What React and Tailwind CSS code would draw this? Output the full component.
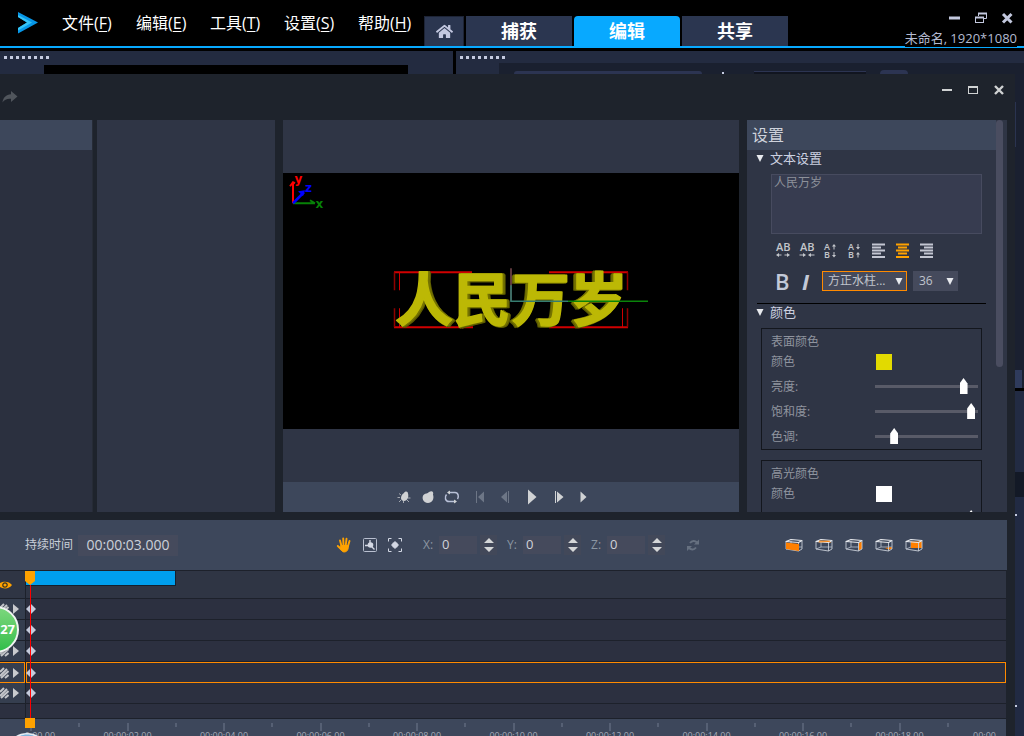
import React from "react";
import { FaHome } from "react-icons/fa";

const menus = [
  ["文件", "F"],
  ["编辑", "E"],
  ["工具", "T"],
  ["设置", "S"],
  ["帮助", "H"],
];

const tabs = ["捕获", "编辑", "共享"];

function Header() {
  return (
    <header className="flex h-12 shrink-0 items-end border-b-2 border-[#08a9ff] bg-black">
      <div className="flex h-full w-[62px] shrink-0 items-center pl-[18px]">
        <svg width="20" height="22" viewBox="0 0 20 22" aria-hidden="true">
          <path d="M0 0 L20 10.5 L0 21.5 V16 L9 10.5 L0 5 Z" fill="#0797e8" />
          <path d="M0 3 L14 10.5 L0 18.5 V16 L9 10.5 L0 5 Z" fill="#35c4f5" />
        </svg>
      </div>
      <nav className="flex h-full items-center">
        {menus.map(([name, key]) => (
          <button key={key} type="button" className="w-[74px] text-left text-base text-white last:w-[66px]">
            {name}(<span className="underline underline-offset-2">{key}</span>)
          </button>
        ))}
      </nav>
      <div className="flex items-end gap-0.5">
        <button type="button" aria-label="主页" className="flex h-[30px] w-10 items-center justify-center border border-b-0 border-[#1d2436] bg-[#2b3650] text-[#c3c8e0]">
          <FaHome size={17} />
        </button>
        {tabs.map((t) => (
          <button
            key={t}
            type="button"
            className={
              "h-[30px] w-[106px] text-lg leading-[30px] font-bold text-white " +
              (t === "编辑" ? "rounded-t-sm bg-[#08a9ff]" : "bg-[#2b3650]")
            }
          >
            {t}
          </button>
        ))}
      </div>
      <div className="ml-auto flex h-full flex-col items-end justify-end pr-[7px]">
        <div className="flex items-center gap-3.5 pr-1 text-[#c3c8de]">
          <button type="button" aria-label="最小化">
            <svg width="12" height="12" viewBox="0 0 12 12"><path d="M0 6 H11" stroke="currentColor" strokeWidth="3" /></svg>
          </button>
          <button type="button" aria-label="还原">
            <svg width="12" height="12" viewBox="0 0 12 12" fill="none" stroke="currentColor">
              <path d="M3.5 4 V1.5 H11.5 V6.5 H9" /><path d="M3 1.5 H12" strokeWidth="2" />
              <rect x="0.5" y="5.5" width="8" height="5" /><path d="M0 5.5 H9" strokeWidth="2" />
            </svg>
          </button>
          <button type="button" aria-label="关闭">
            <svg width="12" height="12" viewBox="0 0 12 12"><path d="M2 2 L10.500 10.500 M10.500 2 L2 10.500" stroke="currentColor" strokeWidth="3" /></svg>
          </button>
        </div>
        <div className="mt-1.5 -mb-px bg-black text-[13px] leading-[17px] text-[#b4bbd0]">未命名, 1920*1080</div>
      </div>
    </header>
  );
}

function Grip() {
  return (
    <div className="flex gap-[3px] pt-[5px] pl-1">
      {[0, 1, 2, 3, 4, 5, 6, 7].map((i) => (
        <span key={i} className="size-[3px] bg-[#c5cbe0]" />
      ))}
    </div>
  );
}

function BackPanels() {
  return (
    <div className="flex h-[26px] shrink-0 gap-[3px] bg-black pt-[3px]">
      <div className="flex w-[453px] flex-col justify-between bg-[#232b40]">
        <Grip />
        <div className="mr-[45px] ml-11 h-[9px] bg-black" />
      </div>
      <div className="flex flex-1 flex-col justify-between bg-[#232b40]">
        <Grip />
        <div className="ml-[43px] flex h-[11px] items-end bg-[#1a202f] pl-[15px]">
          <span className="h-[3px] w-[188px] rounded-t-sm bg-[#2c3452]" />
          <span className="ml-5 size-0.5 bg-[#c5cbe0]" />
          <span className="ml-[30px] h-[3px] w-28 border-t border-[#2c3452] bg-[#111520]" />
          <span className="ml-3.5 h-1 w-7 rounded-t-sm bg-[#2c3452]" />
        </div>
      </div>
    </div>
  );
}

function RightEdge() {
  return (
    <div className="flex w-[9px] shrink-0 flex-col bg-[#1a2030]">
      <div className="mt-7 h-[45px] w-px bg-[#2a3350]" />
      <div className="mt-[223px] h-[18px] w-[7px] bg-[#2f3b5c]" />
      <div className="h-[3px] bg-black" />
      <div className="h-[81px] bg-[#222b43]" />
      <div className="h-[25px] bg-[#131926]" />
      <div className="flex flex-1 flex-col bg-[#212a43]">
        <span className="mt-[17px] size-0.5 bg-[#c5cbe0]" />
        <span className="mt-[189px] size-0.5 bg-[#c5cbe0]" />
      </div>
    </div>
  );
}

function TitleBar() {
  return (
    <div className="flex h-[46px] shrink-0 items-start justify-between">
      <button type="button" aria-label="重做" className="mt-4 ml-0.5 text-[#50555c]">
        <svg width="16" height="14" viewBox="0 0 16 14"><path d="M9 1 L15.500 6.500 L9 12 V8.800 C5 8.500 2.500 9.500 0.500 12.500 C1 7.500 4 4.500 9 4.200 Z" fill="currentColor" /></svg>
      </button>
      <div className="mt-2.5 flex gap-3.5 pr-2.5 text-[#d0d2d3]">
        <button type="button" aria-label="最小化">
          <svg width="12" height="12" viewBox="0 0 12 12"><path d="M1 6 H11" stroke="currentColor" strokeWidth="2" /></svg>
        </button>
        <button type="button" aria-label="最大化">
          <svg width="12" height="12" viewBox="0 0 12 12" fill="none" stroke="currentColor"><rect x="1.500" y="2.500" width="9" height="7" /><path d="M1 3 H11" strokeWidth="2" /></svg>
        </button>
        <button type="button" aria-label="关闭">
          <svg width="12" height="12" viewBox="0 0 12 12"><path d="M2 2 L10 10 M10 2 L2 10" stroke="currentColor" strokeWidth="2.400" /></svg>
        </button>
      </div>
    </div>
  );
}

function Canvas3D() {
  return (
    <svg className="block aspect-video w-full bg-black" viewBox="0 0 456 256">
      <g fontFamily="'DejaVu Sans', sans-serif" fontWeight="700" fontSize="12">
        <path d="M10 30 V9 M7 13 L10 9 L12 10" stroke="#f00" strokeWidth="2" fill="none" />
        <path d="M10 30 H32 M27 27 L32 30" stroke="#078207" strokeWidth="2" fill="none" />
        <path d="M10 30 L21 19" stroke="#00f" strokeWidth="2.500" />
        <path d="M15 18 L22 17 L20 23 Z" fill="#00f" />
        <text x="11.500" y="10" fill="#f00">y</text>
        <text x="22" y="19" fill="#00f">z</text>
        <text x="32.500" y="35" fill="#078207">x</text>
      </g>
      <g fill="none" stroke="#d00000" strokeWidth="2">
        <path d="M111 99 H189 M266 99 H345 M111 154 H190 M266 154 H345" />
        <path d="M111.500 99 V117 M111.500 135 V154 M344.500 99 V117 M344.500 135 V154" stroke="#8e0000" strokeWidth="1.500" />
        <path d="M116.500 99 V117 M116.500 135 V154 M339.500 135 V154" strokeWidth="1" />
      </g>
      <g
        fontFamily="'Noto Sans CJK SC', sans-serif"
        fontWeight="700"
        fontSize="58"
        fill="#bcb805"
        stroke="#bcb805"
        strokeLinejoin="round"
        strokeWidth="1.500"
      >
        <text x="112" y="148" className="[filter:drop-shadow(2px_0_0_#747200)_drop-shadow(1px_1px_0_#5c5b00)]">人民</text>
        <text x="229" y="148" className="[filter:drop-shadow(-2px_0_0_#747200)_drop-shadow(-1px_1px_0_#5c5b00)]">万岁</text>
      </g>
      <path d="M228 95 V128" stroke="#7c4a50" strokeWidth="1.500" />
      <path d="M228 112 V128 H285" stroke="#357c70" strokeWidth="1.500" fill="none" />
      <path d="M285 128 H365" stroke="#0a840a" strokeWidth="1.500" />
    </svg>
  );
}

function PlayButton({ label, dim, wide, children }) {
  return (
    <button
      type="button"
      aria-label={label}
      className={"flex h-full items-center justify-center " + (wide ? "w-[26px] " : "w-6 ") + (dim ? "text-[#6d7686]" : "text-[#d0d2d4]")}
    >
      <svg width="16" height="16" viewBox="0 0 16 16" fill="currentColor">{children}</svg>
    </button>
  );
}

function Preview() {
  return (
    <section className="flex min-w-0 flex-1 flex-col bg-[#2f3545]">
      <div className="flex min-h-0 flex-1 flex-col justify-center">
        <Canvas3D />
      </div>
      <div className="flex h-[30px] shrink-0 items-center bg-[#3d475b] pl-[109px]">
        <PlayButton label="光源">
          <path d="M8 4 C9 1.800 12 2 12 4.500 C13 8 11.500 12 8 12 C4 12 4 6.500 8 4 Z" />
          <path d="M1.500 8.500 H4 M3 4.500 L5 6 M3 13 L5 11 M7.500 12 V14 M11 11 L13 13 M12 9 H14.500" stroke="currentColor" strokeOpacity="0.7" />
        </PlayButton>
        <PlayButton label="材质">
          <path d="M9 3 C12 1 14 3 13 5.500 C14.500 10 12 14 8 14 C3 14 1 8 4 5.500 C5.500 4 7.500 5 9 3 Z" />
        </PlayButton>
        <PlayButton label="循环">
          <path d="M4 3.500 H11 C14.500 3.500 15 8 13.500 10 M12 12.500 H5 C1 12.500 0.500 8 2.500 5.500" stroke="#b9c1d8" strokeWidth="1.500" fill="none" />
          <path d="M3 3.500 L6 1.500 V5.500 Z M13 12.500 L10 10.500 V14.500 Z" />
        </PlayButton>
        <div className="ml-[3px] flex h-full">
          <PlayButton label="开始" dim wide><path d="M4 2 H5 V14 H4 Z M12 2.500 V13.500 L6 8 Z" /></PlayButton>
          <PlayButton label="上一帧" dim wide><path d="M10 2 H11 V14 H10 Z M9 2.500 V13.500 L3 8 Z" /></PlayButton>
          <PlayButton label="播放" wide><path d="M4 0.500 V15.500 L12.500 8 Z" /></PlayButton>
          <PlayButton label="下一帧" wide><path d="M5 2 H6 V14 H5 Z M7 2.500 V13.500 L13.500 8 Z" /></PlayButton>
          <PlayButton label="结尾" wide><path d="M4.500 2.500 V13.500 L10.500 8 Z" /></PlayButton>
        </div>
      </div>
    </section>
  );
}

function Caret() {
  return (
    <svg width="10" height="8" viewBox="0 0 10 8" aria-hidden="true" className="shrink-0">
      <path d="M1.500 1 H8.500 L5 8 Z" fill="#e8eaee" />
    </svg>
  );
}

function SpacingIcon({ label, inward }) {
  return (
    <button type="button" aria-label={label} className="w-6 text-[#c3c6cb]">
      <svg width="16" height="16" viewBox="0 0 16 16" fill="currentColor" className="overflow-visible">
        <text x="1" y="8" fontSize="11" fontWeight="600" fontFamily="'Open Sans', sans-serif">AB</text>
        {inward ? (
          <path d="M0.500 11.500 H4 V10 L7 12 L4 14 V12.500 H0.500 Z M15.500 11.500 H12 V10 L9 12 L12 14 V12.500 H15.500 Z" />
        ) : (
          <path d="M6.500 11.500 H4 V10 L1 12 L4 14 V12.500 H6.500 Z M9.500 11.500 H12 V10 L15 12 L12 14 V12.500 H9.500 Z" />
        )}
      </svg>
    </button>
  );
}

function LeadingIcon({ label, inward }) {
  return (
    <button type="button" aria-label={label} className="w-6 text-[#c3c6cb]">
      <svg width="16" height="16" viewBox="0 0 16 16" fill="currentColor" className="overflow-visible">
        <g fontSize="9" fontWeight="600" fontFamily="'Open Sans', sans-serif">
          <text x="1" y="7">A</text>
          <text x="1" y="15">B</text>
        </g>
        {inward ? (
          <path d="M10.500 1 H11.500 V4 H13 L11 6.500 L9 4 H10.500 Z M10.500 14.500 H11.500 V11.500 H13 L11 9 L9 11.500 H10.500 Z" />
        ) : (
          <path d="M10.500 6.500 H11.500 V3.500 H13 L11 1 L9 3.500 H10.500 Z M10.500 9 H11.500 V12 H13 L11 14.500 L9 12 H10.500 Z" />
        )}
      </svg>
    </button>
  );
}

function AlignIcon({ label, d, active }) {
  return (
    <button type="button" aria-label={label} className={"w-6 " + (active ? "text-[#ffa200]" : "text-[#c3c6d2]")}>
      <svg width="16" height="16" viewBox="0 0 16 16"><path d={d} stroke="currentColor" strokeWidth="1.800" /></svg>
    </button>
  );
}

function SliderRow({ id, label, value }) {
  return (
    <div className="flex h-[25px] items-center justify-between pr-[3px]">
      <label htmlFor={id}>{label}</label>
      <input
        id={id}
        type="range"
        min="0"
        max="100"
        defaultValue={value}
        className="h-4 w-[103px] appearance-none bg-transparent [&::-webkit-slider-runnable-track]:h-[3px] [&::-webkit-slider-runnable-track]:bg-[#595b68] [&::-webkit-slider-thumb]:-mt-[7px] [&::-webkit-slider-thumb]:h-4 [&::-webkit-slider-thumb]:w-2 [&::-webkit-slider-thumb]:appearance-none [&::-webkit-slider-thumb]:bg-white [&::-webkit-slider-thumb]:[clip-path:polygon(50%_0,100%_35%,100%_100%,0_100%,0_35%)]"
      />
    </div>
  );
}

function ColorBox({ id, title, yellow, values }) {
  return (
    <fieldset className="mr-[14px] ml-3.5 border border-[#13161d] pt-[3px] pl-[9px] text-xs text-[#8f949f]">
      <div className="h-5 leading-5">{title}</div>
      <div className="flex h-5 items-center">
        <span className="w-[105px]">颜色</span>
        <button type="button" aria-label={title} className={"size-4 " + (yellow ? "bg-[#e2da00]" : "bg-white")} />
      </div>
      <div className="pt-0.5">
        <SliderRow id={id + "-l"} label="亮度:" value={values[0]} />
        <SliderRow id={id + "-s"} label="饱和度:" value={values[1]} />
        <SliderRow id={id + "-h"} label="色调:" value={values[2]} />
      </div>
    </fieldset>
  );
}

function Settings() {
  return (
    <section className="flex w-[260px] shrink-0 overflow-hidden bg-[#2f3545]">
      <div className="min-w-0 flex-1 overflow-hidden">
        <h2 className="h-[30px] bg-[#3d475b] pl-[5px] text-base leading-[30px] text-[#ced2dc]">设置</h2>
        <h3 className="flex h-4 items-center gap-[5px] pl-2 text-[13px] leading-4 text-[#ccd1e0]"><Caret />文本设置</h3>
        <textarea
          aria-label="文本"
          defaultValue="人民万岁"
          className="mt-2 mr-[14px] ml-6 block h-[60px] w-[211px] resize-none border border-[#474b5f] bg-[#373c50] px-0.5 text-xs leading-4 text-[#8d919a]"
        />
        <div className="mt-[9px] ml-7 flex h-4">
          <SpacingIcon label="加宽字距" />
          <SpacingIcon label="缩小字距" inward />
          <LeadingIcon label="加大行距" />
          <LeadingIcon label="缩小行距" inward />
          <AlignIcon label="左对齐" d="M1 1.500 H14 M1 4.500 H10 M1 7.500 H14 M1 10.500 H10 M1 14 H14" />
          <AlignIcon label="居中" active d="M1 1.500 H14 M3 4.500 H12 M1 7.500 H14 M3 10.500 H12 M1 14 H14" />
          <AlignIcon label="右对齐" d="M1 1.500 H14 M5 4.500 H14 M1 7.500 H14 M5 10.500 H14 M1 14 H14" />
        </div>
        <div className="mt-3 ml-7 flex h-5 items-center text-[22px] leading-5 text-[#c3c9d8]">
          <button type="button" aria-label="粗体" className="w-[27px] text-left font-semibold">B</button>
          <button type="button" aria-label="斜体" className="w-5 text-left font-bold italic">I</button>
          <div className="relative w-[85px]">
            <select aria-label="字体" className="block h-5 w-full appearance-none border border-[#ff8a00] bg-[#454a5c] pl-[5px] text-xs leading-[18px] text-[#c0c4cd]">
              <option>方正水柱...</option>
            </select>
            <div className="pointer-events-none absolute inset-y-0 right-[3px] flex items-center"><Caret /></div>
          </div>
          <div className="relative ml-1.5 w-[45px]">
            <select aria-label="字号" className="block h-5 w-full appearance-none bg-[#454a5c] pl-1.5 text-xs leading-5 text-[#c0c4cd]">
              <option>36</option>
            </select>
            <div className="pointer-events-none absolute inset-y-0 right-[3px] flex items-center"><Caret /></div>
          </div>
        </div>
        <hr className="mt-3 mr-2.5 ml-2.5 border-t border-black" />
        <h3 className="flex h-4 items-center gap-[5px] pl-2 text-[13px] leading-4 text-[#ccd1e0]"><Caret />颜色</h3>
        <div className="mt-2 flex flex-col gap-2.5">
          <ColorBox id="surface" title="表面颜色" yellow values={[89, 97, 16]} />
          <ColorBox id="highlight" title="高光颜色" values={[97, 0, 0]} />
        </div>
      </div>
      <div className="w-[11px] bg-[#2f3545]">
        <div className="h-[247px] w-[7px] rounded-sm bg-[#4a4d60]" />
      </div>
    </section>
  );
}

function AxisField({ axis }) {
  return (
    <div className="flex items-center">
      <label htmlFor={"axis-" + axis} className="w-4 text-xs text-[#8b96a2]">{axis}:</label>
      <input id={"axis-" + axis} defaultValue="0" className="h-[18px] w-[38px] bg-[#454a5c] pb-0.5 pl-[3px] text-[13px] leading-4 text-[#d0d3da]" />
      <button type="button" aria-label={axis + " 微调"} className="ml-[3px] flex h-5 w-[17px] items-center justify-center bg-[#424859] text-[#d5d7d8]">
        <svg width="10" height="14" viewBox="0 0 10 14" fill="currentColor"><path d="M0 5 L5 0 L10 5 Z M0 9 H10 L5 14 Z" /></svg>
      </button>
    </div>
  );
}

const faces = [
  { label: "正面", d: "M1 5.500 L14 7 V14 L1 12 Z" },
  { label: "顶面", d: "M2 4.500 L15 4 L16 5.500 L4 5.500 Z" },
  { label: "侧面", d: "M14 6 L17 4.500 V12 L14 13.500 Z" },
  { label: "底面", d: "M10 11 L17 10 V12 L14 12.500 Z" },
  { label: "背面", d: "M6 4.500 H17 V11 H6 Z" },
];

function CubeIcon({ label, d }) {
  return (
    <button type="button" aria-label={label}>
      <svg width="18" height="16" viewBox="0 0 18 16" fill="none">
        <path d="M6 4 V10 H17 M1 12 L6 10" stroke="#a9b1bf" strokeWidth="0.900" />
        {label !== "正面" && <path d={d} fill="#ff7f00" />}
        <path d="M1 5 V12 L13.500 14 L17 12 M13.500 6 V14 M17 4 V12" stroke="#c5cbd5" strokeWidth="0.900" />
        {label === "正面" && <path d={d} fill="#ff7f00" />}
        <path d="M1 4.500 L6 2.500 L17 3.500 L13.500 5.500 Z" stroke="#e6e8ec" strokeWidth="1.200" strokeLinejoin="round" />
        {label === "顶面" && <path d="M4 4.200 L15 4.200" stroke="#ff8d1a" />}
      </svg>
    </button>
  );
}

function Toolbar() {
  return (
    <div className="mr-2 flex h-[50px] shrink-0 items-center bg-[#3d475b] pl-[25px]">
      <label htmlFor="duration" className="w-[53px] text-xs text-[#c9ced8]">持续时间</label>
      <input id="duration" defaultValue="00:00:03.000" className="h-[21px] w-[100px] bg-[#454a5c] pb-0.5 text-center text-sm leading-5 text-[#ccd0da]" />
      <div className="ml-[158px] flex items-center gap-[11px]">
        <button type="button" aria-label="平移">
          <svg width="16" height="16" viewBox="0 0 16 16" stroke="#ffa200" fill="#ffa200" strokeLinecap="round">
            <path d="M5 8.500 L12.500 8.500 L12 12 C11 15.500 7 15.500 6 14 L4 11 Z" />
            <path d="M5.500 9 L4 3.500 M7.500 8 L7.200 1.500 M9.800 8 L10.500 1.800 M12 9 L13.500 4 M5.500 12.500 L1.800 9" strokeWidth="1.900" fill="none" />
          </svg>
        </button>
        <button type="button" aria-label="旋转">
          <svg width="14" height="14" viewBox="0 0 14 14" fill="#d3d8e4">
            <rect x="0.500" y="0.500" width="13" height="13" rx="1" fill="none" stroke="#b9c0d0" />
            <circle cx="7.500" cy="7" r="2.800" /><path d="M7 2 V5 M2 7.500 H5 M8 8 L11.500 11.500" stroke="#d3d8e4" strokeWidth="1.400" />
          </svg>
        </button>
        <button type="button" aria-label="缩放">
          <svg width="14" height="14" viewBox="0 0 14 14" fill="#d3d8e4">
            <path d="M0.500 3.500 V0.500 H3.500 M10.500 0.500 H13.500 V3.500 M13.500 10.500 V13.500 H10.500 M3.500 13.500 H0.500 V10.500" fill="none" stroke="#d3d8e4" />
            <circle cx="7" cy="7" r="3" /><path d="M7 3 V11 M3 7 H11" stroke="#d3d8e4" />
          </svg>
        </button>
      </div>
      <div className="ml-[21px] flex items-center gap-2.5">
        <AxisField axis="X" />
        <AxisField axis="Y" />
        <AxisField axis="Z" />
      </div>
      <button type="button" aria-label="重置" className="ml-[21px] text-[#667080]">
        <svg width="14" height="14" viewBox="0 0 14 14" fill="none" stroke="currentColor" strokeWidth="2">
          <path d="M4 5 C6 2.500 9 2.500 11 4.500 M10 9.500 C8 12 5 12 3 10" />
          <path d="M8 6.500 H13 V1.500 Z M6 8 H1 V13 Z" fill="currentColor" stroke="none" />
        </svg>
      </button>
      <div className="mr-[84px] ml-auto flex gap-3">
        {faces.map((f) => <CubeIcon key={f.label} {...f} />)}
      </div>
    </div>
  );
}

function TrackRow({ selected }) {
  return (
    <div className="flex h-[21px] border-t border-[#1d212b]">
      <div className={"flex w-[25px] items-center justify-between bg-[#353e4f] pr-[6px] " + (selected ? "z-10 -mb-px border border-l-0 border-[#ff8a00]" : "")}>
        <svg width="9" height="12" viewBox="0 0 9 12" aria-hidden="true">
          <path d="M0 5 L4 1 M0 9 L7 2 M1 11 L8.500 4 M5 11 L8.500 8" stroke="#c4c6ca" strokeWidth="2" />
        </svg>
        <button type="button" aria-label="展开" className={selected ? "-mr-px" : ""}>
          <svg width="6" height="10" viewBox="0 0 6 10"><path d="M0 0 L6 5 L0 10 Z" fill="#c9cbce" /></svg>
        </button>
      </div>
      <div className="w-px bg-[#1d212b]" />
      <div className={"flex min-w-0 flex-1 items-center bg-[#2c3040] " + (selected ? "z-10 -mb-px border border-[#ff8a00]" : "")}>
        <svg width="10" height="10" viewBox="0 0 10 10" className={selected ? "-ml-px" : ""} aria-hidden="true">
          <path d="M5 0 L10 5 L5 10 L0 5 Z" fill="#c5cbdc" />
        </svg>
      </div>
    </div>
  );
}

const marks = ["00:00:00.00", "00:00:02.00", "00:00:04.00", "00:00:06.00", "00:00:08.00", "00:00:10.00", "00:00:12.00", "00:00:14.00", "00:00:16.00", "00:00:18.00"];

function Mark({ text }) {
  return (
    <div className="flex w-0 flex-col items-center">
      <span className="mt-1 h-2 w-0.5 bg-[#566074]" />
      <span className="text-[9px] leading-[10px] whitespace-nowrap text-[#a5abb8]">{text}</span>
    </div>
  );
}

function Timeline() {
  return (
    <section className="relative mr-[9px] shrink-0 border-t border-[#1d212b] bg-[#2c3040]">
      <div className="flex h-[27px] bg-[#2f3544]">
        <button type="button" aria-label="显示" className="flex w-[25px] items-center">
          <svg width="12" height="8" viewBox="0 0 12 8">
            <path d="M-2 4 C1 -0.500 9 -0.500 12 4 C9 8.500 1 8.500 -2 4 Z" fill="#ffa200" />
            <circle cx="5" cy="4" r="2.200" fill="#ffa200" stroke="#3a3320" strokeWidth="1.200" />
          </svg>
        </button>
        <div className="w-px bg-[#1d212b]" />
        <div className="h-[15px] w-[150px] border-r border-b border-[#14202e] bg-[#009fee]" />
      </div>
      <TrackRow />
      <TrackRow />
      <TrackRow />
      <TrackRow selected />
      <TrackRow />
      <div className="flex h-[15px] border-t border-[#1d212b] pl-[25px]">
        <div className="w-px bg-[#1d212b]" />
      </div>
      <div className="h-[18px] overflow-hidden border-t border-[#1d212b] bg-[#3d475b] pl-[25px]">
        <div className="flex overflow-hidden pr-2.5 pl-1.5">
          {marks.map((m) => (
            <div key={m} className="flex flex-1">
              <Mark text={m} />
              <div className="flex flex-1 justify-center"><span className="mt-1 h-1 w-0.5 bg-[#566074]" /></div>
            </div>
          ))}
          <div className="flex w-0 justify-end pt-3 text-[9px] leading-[10px] whitespace-nowrap text-[#a5abb8]">00:00</div>
        </div>
      </div>
      <div className="pointer-events-none absolute inset-y-0 left-[25px] z-20 flex w-2.5 flex-col items-center">
        <svg width="10" height="14" viewBox="0 0 10 14" className="shrink-0"><path d="M0 0 H10 V10 L5 14 L0 10 Z" fill="#ffa200" /></svg>
        <div className="w-px flex-1 bg-[#f00]" />
        <div className="mb-2 size-2.5 shrink-0 bg-[#ffa200]" />
      </div>
      <div className="absolute top-[35px] -left-7 z-30 flex size-[47px] items-center justify-end rounded-full border-2 border-[#f0f4f2] bg-linear-to-b from-[#7bd77d] to-[#2dbe4a] pr-0.5 text-[13px] font-bold text-white shadow">
        27
      </div>
      <svg className="absolute bottom-0 left-4 z-30" width="22" height="4" viewBox="0 0 22 4" aria-hidden="true">
        <path d="M0 4 C5 0 17 0 22 4 Z" fill="#e4edf5" />
        <path d="M4 4 C8 2 14 2 18 4 Z" fill="#7fb4dc" />
      </svg>
    </section>
  );
}

export default function App() {
  return (
    <div className="flex h-screen flex-col overflow-hidden bg-[#1e232c] [font-family:'Open_Sans','Noto_Sans_CJK_SC',sans-serif]">
      <Header />
      <BackPanels />
      <div className="flex min-h-0 flex-1">
        <main className="flex min-w-0 flex-1 flex-col">
          <TitleBar />
          <div className="flex min-h-0 flex-1 pr-2">
            <section className="w-[93px] shrink-0 border-r border-[#262b36] bg-[#2b303f]">
              <div className="h-[30px] bg-[#3d475b]" />
            </section>
            <section className="ml-1 w-[178px] shrink-0 bg-[#2f3545]" />
            <div className="flex min-w-0 flex-1 gap-2 pl-2">
              <Preview />
              <Settings />
            </div>
          </div>
          <div className="h-2 shrink-0" />
          <Toolbar />
          <Timeline />
        </main>
        <RightEdge />
      </div>
    </div>
  );
}
